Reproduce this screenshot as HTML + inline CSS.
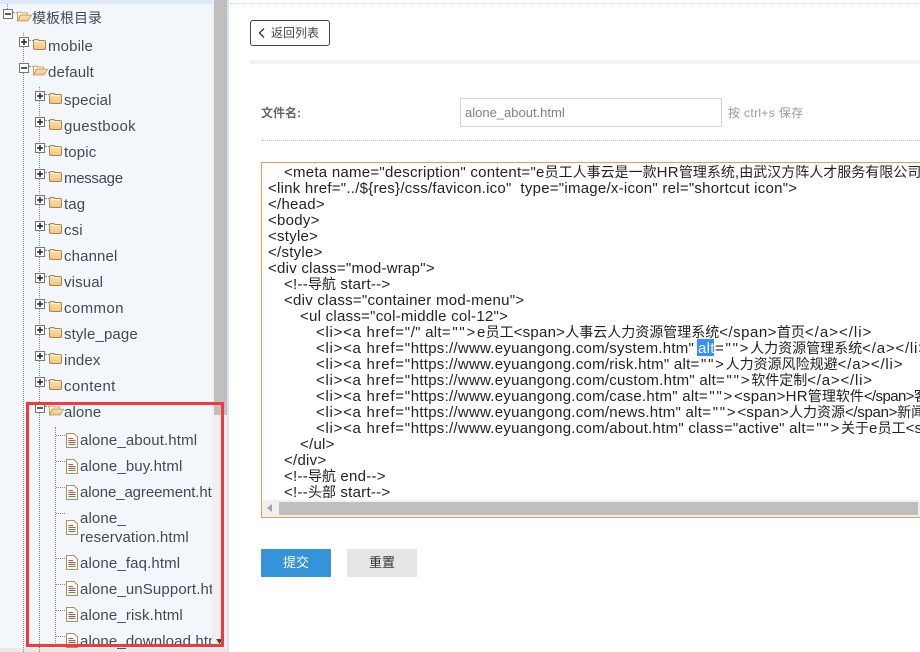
<!DOCTYPE html>
<html><head><meta charset="utf-8"><style>
html,body{margin:0;padding:0;background:#fff}
#p{position:relative;width:920px;height:652px;overflow:hidden;background:#fff;font-family:"Liberation Sans","Noto Sans CJK SC",sans-serif}
#p div,#p svg{position:absolute}
.t{font-size:15px;letter-spacing:.13px;line-height:20px;height:20px;color:#3f4a56;white-space:pre}
.c{font-size:15px;letter-spacing:.26px;line-height:16px;height:16px;color:#222;white-space:pre}
.k{font-size:14px;letter-spacing:0}
.a{letter-spacing:.72px}
.q{letter-spacing:1.75px}
.e{letter-spacing:.8px}
.b{width:8px;height:8px;border:1px solid #777;background:#fff}
.b:before{content:"";position:absolute;left:1px;top:3px;width:6px;height:2px;background:#222;transform:scaleY(.75)}
.pl:after{content:"";position:absolute;left:3px;top:1px;width:2px;height:6px;background:#222;transform:scaleX(.75)}
.v{width:0;border-left:1px dotted #888}
.h{height:0;border-top:1px dotted #888}
</style></head><body><div id="p">
<svg width="0" height="0"><defs>
<linearGradient id="g" x1="0" y1="0" x2="0" y2="1"><stop offset="0" stop-color="#fde3b0"/><stop offset="1" stop-color="#f7c47c"/></linearGradient>
<symbol id="f" viewBox="0 0 13 11"><path d="M.5 2.5Q.5 .5 2 .5H5L6 1.500H11Q12.500 1.500 12.500 3V9Q12.500 10.500 11 10.500H2Q.5 10.500 .5 9Z" fill="url(#g)" stroke="#ab8450"/><path d="M1.500 2.500H11.500" stroke="#fff2d8"/></symbol>
<symbol id="o" viewBox="0 0 17 11"><path d="M.5 2Q.5 .5 1.500 .5H5L6 1.500H12V4H4L.5 10Z" fill="#fff2d8" stroke="#c49c62"/><path d="M.7 10.500L4 4H16.500L12.500 10.500Z" fill="url(#g)" stroke="#c49c62"/></symbol>
<symbol id="d" viewBox="0 0 12 15"><path d="M.5 .5H8L11.500 4V14.500H.5Z" fill="#fffdf6" stroke="#ab8f5f"/><path d="M2.500 5.500H7" stroke="#e5433b"/><path d="M2.500 7.500H9.500" stroke="#e5433b"/><path d="M2.500 9.500H9.500" stroke="#666"/><path d="M2.500 11.500H9.500" stroke="#2f9a64"/></symbol>
</defs></svg>

<div style="left:0;top:0;width:229px;height:652px;background:#f3f7fb"></div>
<div style="left:0;top:0;width:213px;height:4px;background:#dceaf7"></div>
<div style="left:212px;top:0;width:15px;height:652px;background:#f0f0f0"></div>
<div style="left:214px;top:0;width:13px;height:415px;background:#bfbfbf"></div>
<div style="left:227px;top:0;width:2px;height:652px;background:#d5e4f2"></div>
<div style="left:0;top:648px;width:227px;height:4px;background:#e9e9e9"></div>
<div class="h" style="left:230px;top:3px;width:690px;border-top-color:#b9d4ea"></div>

<div class="v" style="left:7px;top:4px;height:5px"></div>
<div class="v" style="left:23px;top:33px;height:619px"></div>
<div class="v" style="left:39px;top:87px;height:565px"></div>
<div class="v" style="left:55px;top:427px;height:220px"></div>

<div class="h" style="left:13px;top:12px;width:4px"></div>
<div class="h" style="left:29px;top:40px;width:4px"></div><div class="h" style="left:29px;top:66px;width:4px"></div>
<div class="h" style="left:45px;top:94px;width:4px"></div><div class="h" style="left:45px;top:120px;width:4px"></div><div class="h" style="left:45px;top:146px;width:4px"></div><div class="h" style="left:45px;top:172px;width:4px"></div><div class="h" style="left:45px;top:198px;width:4px"></div><div class="h" style="left:45px;top:224px;width:4px"></div><div class="h" style="left:45px;top:250px;width:4px"></div><div class="h" style="left:45px;top:276px;width:4px"></div><div class="h" style="left:45px;top:302px;width:4px"></div><div class="h" style="left:45px;top:328px;width:4px"></div><div class="h" style="left:45px;top:354px;width:4px"></div><div class="h" style="left:45px;top:380px;width:4px"></div><div class="h" style="left:45px;top:406px;width:4px"></div>
<div class="h" style="left:56px;top:435px;width:9px"></div><div class="h" style="left:56px;top:461px;width:9px"></div><div class="h" style="left:56px;top:487px;width:9px"></div><div class="h" style="left:56px;top:513px;width:9px"></div><div class="h" style="left:56px;top:558px;width:9px"></div><div class="h" style="left:56px;top:584px;width:9px"></div><div class="h" style="left:56px;top:610px;width:9px"></div><div class="h" style="left:56px;top:636px;width:9px"></div>

<div class="b" style="left:3px;top:9px"></div>
<div class="b pl" style="left:19px;top:37px"></div><div class="b" style="left:19px;top:63px"></div>
<div class="b pl" style="left:35px;top:91px"></div><div class="b pl" style="left:35px;top:117px"></div><div class="b pl" style="left:35px;top:143px"></div><div class="b pl" style="left:35px;top:169px"></div><div class="b pl" style="left:35px;top:195px"></div><div class="b pl" style="left:35px;top:221px"></div><div class="b pl" style="left:35px;top:247px"></div><div class="b pl" style="left:35px;top:273px"></div><div class="b pl" style="left:35px;top:299px"></div><div class="b pl" style="left:35px;top:325px"></div><div class="b pl" style="left:35px;top:351px"></div><div class="b pl" style="left:35px;top:377px"></div><div class="b" style="left:35px;top:403px"></div>

<svg style="left:17px;top:11px" width="15" height="11"><use href="#o"/></svg>
<svg style="left:33px;top:39px" width="13" height="11"><use href="#f"/></svg>
<svg style="left:33px;top:65px" width="15" height="11"><use href="#o"/></svg>
<svg style="left:49px;top:93px" width="13" height="11"><use href="#f"/></svg><svg style="left:49px;top:119px" width="13" height="11"><use href="#f"/></svg><svg style="left:49px;top:145px" width="13" height="11"><use href="#f"/></svg><svg style="left:49px;top:171px" width="13" height="11"><use href="#f"/></svg><svg style="left:49px;top:197px" width="13" height="11"><use href="#f"/></svg><svg style="left:49px;top:223px" width="13" height="11"><use href="#f"/></svg><svg style="left:49px;top:249px" width="13" height="11"><use href="#f"/></svg><svg style="left:49px;top:275px" width="13" height="11"><use href="#f"/></svg><svg style="left:49px;top:301px" width="13" height="11"><use href="#f"/></svg><svg style="left:49px;top:327px" width="13" height="11"><use href="#f"/></svg><svg style="left:49px;top:353px" width="13" height="11"><use href="#f"/></svg><svg style="left:49px;top:379px" width="13" height="11"><use href="#f"/></svg>
<svg style="left:49px;top:405px" width="15" height="11"><use href="#o"/></svg>
<svg style="left:66px;top:433px" width="12" height="15"><use href="#d"/></svg><svg style="left:66px;top:459px" width="12" height="15"><use href="#d"/></svg><svg style="left:66px;top:485px" width="12" height="15"><use href="#d"/></svg><svg style="left:66px;top:520px" width="12" height="15"><use href="#d"/></svg><svg style="left:66px;top:555px" width="12" height="15"><use href="#d"/></svg><svg style="left:66px;top:581px" width="12" height="15"><use href="#d"/></svg><svg style="left:66px;top:607px" width="12" height="15"><use href="#d"/></svg><svg style="left:66px;top:633px" width="12" height="15"><use href="#d"/></svg>

<div class="t" style="left:32px;top:8px;font-size:14px;letter-spacing:0">模板根目录</div>
<div class="t" style="left:48px;top:37px">mobile</div>
<div class="t" style="left:48px;top:63px">default</div>
<div class="t" style="left:64px;top:91px">special</div>
<div class="t" style="left:64px;top:117px;letter-spacing:.3px">guestbook</div>
<div class="t" style="left:64px;top:143px">topic</div>
<div class="t" style="left:64px;top:169px;letter-spacing:-.3px">message</div>
<div class="t" style="left:64px;top:195px">tag</div>
<div class="t" style="left:64px;top:221px">csi</div>
<div class="t" style="left:64px;top:247px">channel</div>
<div class="t" style="left:64px;top:273px">visual</div>
<div class="t" style="left:64px;top:299px;letter-spacing:.4px">common</div>
<div class="t" style="left:64px;top:325px">style_page</div>
<div class="t" style="left:64px;top:351px">index</div>
<div class="t" style="left:64px;top:377px;letter-spacing:.35px">content</div>
<div class="t" style="left:64px;top:403px">alone</div>
<div class="t" style="left:80px;top:431px">alone_about.html</div>
<div class="t" style="left:80px;top:457px">alone_buy.html</div>
<div class="t" style="left:80px;top:483px;width:132px;overflow:hidden;letter-spacing:-.1px">alone_agreement.html</div>
<div class="t" style="left:80px;top:509px">alone_</div>
<div class="t" style="left:80px;top:528px">reservation.html</div>
<div class="t" style="left:80px;top:554px">alone_faq.html</div>
<div class="t" style="left:80px;top:580px;width:132px;overflow:hidden">alone_unSupport.html</div>
<div class="t" style="left:80px;top:606px">alone_risk.html</div>
<div class="t" style="left:80px;top:632px;width:132px;overflow:hidden">alone_download.html</div>

<svg style="left:216px;top:639px" width="8" height="6"><path d="M0 0H7L3.500 5Z" fill="#444"/></svg>
<div style="left:26px;top:402px;width:192px;height:239px;border:3px solid #f23a3a"></div>

<div style="left:250px;top:20px;width:78px;height:24px;border:1px solid #444;border-radius:3px"></div>
<svg style="left:258px;top:28px" width="8" height="10"><path d="M6 .5L1.500 5L6 9.500" fill="none" stroke="#333" stroke-width="1.300"/></svg>
<div style="left:271px;top:24px;font-size:12px;line-height:18px;color:#444;white-space:pre">返回列表</div>
<div style="left:250px;top:60px;width:670px;height:4px;background:#f2f2f2"></div>
<div style="left:261px;top:104px;font-size:12px;line-height:18px;font-weight:bold;color:#666;white-space:pre">文件名:</div>
<div style="left:460px;top:98px;width:260px;height:27px;border:1px solid #d5d5d5;background:#fff"></div>
<div style="left:465px;top:104px;font-size:13px;line-height:18px;color:#808080;white-space:pre">alone_about.html</div>
<div style="left:728px;top:104px;font-size:12px;letter-spacing:.35px;line-height:18px;color:#999;white-space:pre">按 ctrl+s 保存</div>
<div class="h" style="left:261px;top:140px;width:659px;border-top-color:#bbb"></div>

<div style="left:261px;top:162px;width:670px;height:354px;border:1px solid #ea9c55;background:#fff;overflow:hidden"></div>
<div class="c" style="left:284px;top:164px">&lt;meta name="description" content="e<span class="k">员工人事云是一款</span>HR<span class="k">管理系统</span>,<span class="k">由武汉方阵人才服务有限公司开发</span></div>
<div class="c" style="left:268px;top:181px;letter-spacing:.25px">&lt;link href="../${res}/css/favicon.ico"  type="image/x-icon" rel="shortcut icon"&gt;</div>
<div class="c" style="left:268px;top:197px">&lt;/head&gt;</div>
<div class="c" style="left:268px;top:213px">&lt;body&gt;</div>
<div class="c" style="left:268px;top:229px">&lt;style&gt;</div>
<div class="c" style="left:268px;top:245px">&lt;/style&gt;</div>
<div class="c" style="left:268px;top:261px">&lt;div class="mod-wrap"&gt;</div>
<div class="c" style="left:284px;top:276px">&lt;!--<span class="k">导航</span> start--&gt;</div>
<div class="c" style="left:284px;top:293px">&lt;div class="container mod-menu"&gt;</div>
<div class="c" style="left:300px;top:309px">&lt;ul class="col-middle col-12"&gt;</div>
<div class="c" style="left:316px;top:324px"><span class="a">&lt;li&gt;&lt;a href="</span>/" alt<span class="q">=""&gt;</span>e<span class="k">员工</span>&lt;span&gt;<span class="k">人事云人力资源管理系统</span><span style="letter-spacing:.5px">&lt;/span&gt;</span><span class="k">首页</span><span style="letter-spacing:1px">&lt;/a&gt;&lt;/li&gt;</span></div>
<div style="left:697px;top:339px;width:17px;height:17px;background:#3390ff"></div>
<div class="c" style="left:316px;top:341px"><span class="a">&lt;li&gt;&lt;a href="</span>https://www.eyuangong.com/system.htm"</div>
<div class="c" style="left:698px;top:341px;color:#fff">alt</div>
<div class="c" style="left:715px;top:340px"><span class="q">=""&gt;</span><span class="k">人力资源管理系统</span><span class="e">&lt;/a&gt;&lt;/li&gt;</span></div>
<div class="c" style="left:316px;top:356px"><span class="a">&lt;li&gt;&lt;a href="</span>https://www.eyuangong.com/risk.htm" alt<span class="q">=""&gt;</span><span class="k">人力资源风险规避</span><span class="e">&lt;/a&gt;&lt;/li&gt;</span></div>
<div class="c" style="left:316px;top:372px"><span class="a">&lt;li&gt;&lt;a href="</span>https://www.eyuangong.com/custom.htm" alt<span class="q">=""&gt;</span><span class="k">软件定制</span><span class="e">&lt;/a&gt;&lt;/li&gt;</span></div>
<div class="c" style="left:316px;top:388px"><span class="a">&lt;li&gt;&lt;a href="</span>https://www.eyuangong.com/case.htm" alt<span class="q">=""&gt;</span>&lt;span&gt;HR<span class="k">管理软件</span><span style="letter-spacing:-.6px">&lt;/span&gt;</span><span class="k">客户案例</span></div>
<div class="c" style="left:316px;top:404px"><span class="a">&lt;li&gt;&lt;a href="</span>https://www.eyuangong.com/news.htm" alt<span class="q">=""&gt;</span>&lt;span&gt;<span class="k">人力资源</span><span style="letter-spacing:-.3px">&lt;/span&gt;</span><span class="k">新闻</span>&lt;/a&gt;&lt;/li&gt;</div>
<div class="c" style="left:316px;top:420px"><span class="a">&lt;li&gt;&lt;a href="</span>https://www.eyuangong.com/about.htm" class="active" alt<span class="q">=""&gt;</span><span class="k">关于</span>e<span class="k">员工</span>&lt;span&gt;</div>
<div class="c" style="left:300px;top:437px">&lt;/ul&gt;</div>
<div class="c" style="left:284px;top:453px">&lt;/div&gt;</div>
<div class="c" style="left:284px;top:468px">&lt;!--<span class="k">导航</span> end--&gt;</div>
<div class="c" style="left:284px;top:484px">&lt;!--<span class="k">头部</span> start--&gt;</div>
<div style="left:262px;top:500px;width:658px;height:17px;background:#f0f0f0"></div>
<div style="left:279px;top:502px;width:639px;height:13px;background:#bfbfbf"></div>
<svg style="left:267px;top:504px" width="6" height="8"><path d="M5 0V8L0 4Z" fill="#a3a3a3"/></svg>
<div style="left:261px;top:517px;width:659px;height:1px;background:#ea9c55"></div>
<div style="left:261px;top:549px;width:70px;height:28px;background:#3593da;color:#fff;font-size:13px;line-height:28px;text-align:center">提交</div>
<div style="left:347px;top:549px;width:70px;height:28px;background:#e6e6e6;color:#333;font-size:13px;line-height:28px;text-align:center">重置</div>
</div></body></html>
